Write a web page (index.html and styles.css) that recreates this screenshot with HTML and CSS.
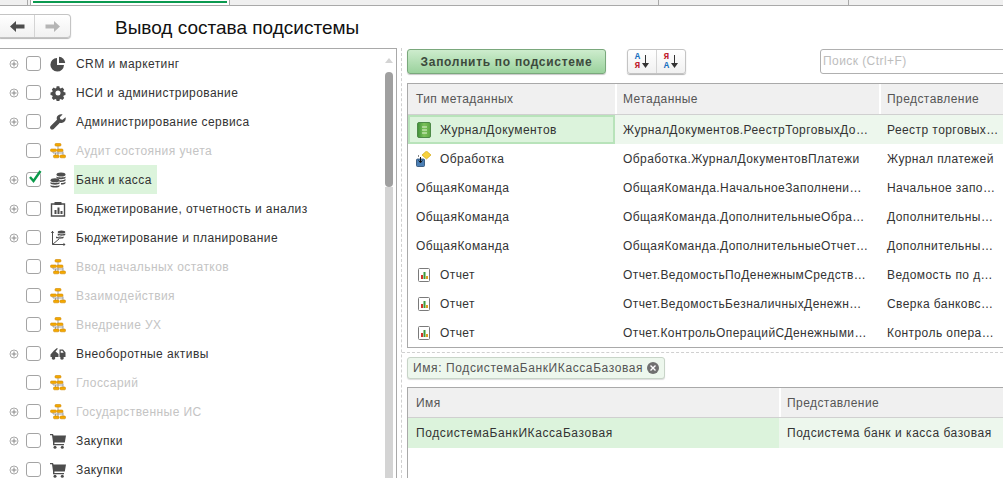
FILE: index.html
```html
<!DOCTYPE html>
<html lang="ru">
<head>
<meta charset="utf-8">
<title>Вывод состава подсистемы</title>
<link rel="stylesheet" href="styles.css">
</head>
<body>
<svg class="defs" width="0" height="0" aria-hidden="true">
  <symbol id="i-plus" viewBox="0 0 10 10"><circle cx="5" cy="5" r="4" fill="#fff" stroke="#a8a8a8"/><path d="M2.500 5h5M5 2.500v5" stroke="#8a8a8a" fill="none"/></symbol>
  <symbol id="i-pie" viewBox="0 0 16 16"><path d="M7 2a6.800 6.800 0 1 0 7 7H7z" fill="#4d4d4d"/><path d="M9 .8a6.600 6.600 0 0 1 6.200 6.200H9z" fill="#4d4d4d"/></symbol>
  <symbol id="i-gear" viewBox="0 0 16 16"><path fill-rule="evenodd" fill="#4d4d4d" d="M6.500 1h3l.4 1.900 1.200.5 1.700-1 2.100 2.100-1 1.700.5 1.200 1.900.4v3l-1.900.4-.5 1.200 1 1.700-2.100 2.100-1.700-1-1.200.5-.4 1.900h-3l-.4-1.900-1.200-.5-1.700 1-2.100-2.100 1-1.700-.5-1.200-1.900-.4v-3l1.900-.4.500-1.200-1-1.700 2.100-2.100 1.700 1 1.200-.5zM8 5.600a2.800 2.800 0 1 0 0 5.600 2.800 2.800 0 0 0 0-5.600z" transform="translate(.8 .4) scale(.9)"/></symbol>
  <symbol id="i-wrench" viewBox="0 0 16 16"><path fill="#4d4d4d" d="M15.500 3.200l-2.900 2.600-2.200-.5-.6-2.100L12.600.5C10.500-.3 8 .6 7.100 2.600c-.5 1.100-.5 2.200-.1 3.200L.7 12c-.9.900-.9 2.200 0 3 .8.800 2.100.8 3 0l6.200-6.300c1 .4 2.200.4 3.300-.1 2-.9 3-3.300 2.300-5.400z"/></symbol>
  <symbol id="i-org" viewBox="0 0 16 16"><path d="M8 3v3M3 8.500V10h10V8.500M8 8.500V12M5.500 10v2M13 10v2" stroke="#8a8a8a" fill="none" stroke-width=".8"/><g fill="#f4a900" stroke="#d08600" stroke-width=".6"><rect x="5" y=".5" width="6" height="2.600" rx="1"/><rect x=".5" y="6" width="6" height="2.600" rx="1"/><rect x="7" y="6" width="6" height="2.600" rx="1"/><rect x="3.500" y="12" width="5.500" height="2.800" rx="1"/><rect x="10" y="12" width="5.500" height="2.800" rx="1"/></g></symbol>
  <symbol id="i-coins" viewBox="0 0 16 16"><g fill="#4d4d4d"><ellipse cx="11" cy="2.500" rx="4.500" ry="2"/><path d="M6.500 4.500c1 1.200 8 1.200 9 0v1.500c-.5 1.500-8.500 1.500-9 0zM8 8.200c2.500.4 6.500.3 7.500-1.100v1.500c-.4 1-3 1.400-5.500 1.300zM11 11c2 0 4-.5 4.500-1.300v1.500c-.4.900-2.500 1.300-4.500 1.300z"/><ellipse cx="5" cy="8.200" rx="4.500" ry="2"/><path d="M.5 10c1 1.200 8 1.200 9 0v1.500c-.5 1.500-8.500 1.500-9 0zM.5 13c1 1.200 8 1.200 9 0v1.300c-.5 1.700-8.500 1.700-9 0z"/></g></symbol>
  <symbol id="i-report" viewBox="0 0 16 16"><path d="M1.500 3h13v12h-13z" fill="#fff" stroke="#4d4d4d" stroke-width="1.400"/><path d="M4.500 1h7v3h-7z" fill="#4d4d4d"/><path d="M4.500 9h2v4h-2zM7.500 6.500h2V13h-2zM10.500 10h2v3h-2z" fill="#4d4d4d"/></symbol>
  <symbol id="i-plan" viewBox="0 0 16 16"><path d="M2.500 1v13.500H15M2.500 14.500L9 9" stroke="#4d4d4d" fill="none"/><path d="M.8 3l1.700-2 1.700 2zM13.500 12.800l2 1.700-2 1.700z" fill="#4d4d4d"/><g fill="#4d4d4d"><ellipse cx="11.500" cy="2" rx="3.800" ry="1.600"/><path d="M7.700 3.500c1 1 6.600 1 7.600 0v1.300c-.5 1.200-7.100 1.200-7.600 0zM6 6.500c1 1 6.600 1 7.600 0v1.300c-.5 1.200-7.100 1.200-7.600 0zM7.700 5.500c1 .6 3 .7 4.500.5-1.500.6-3.500.5-4.500-.1z"/></g></symbol>
  <symbol id="i-truck" viewBox="0 0 16 16"><g fill="#4d4d4d"><path fill-rule="evenodd" d="M9.500 3.500h3.500l2.500 3v4.500H9.500zM10.700 4.700v2.100h3l-1.300-2.100z"/><path d="M.5 11V8.500l3.500-4L7 2l.8.800L5.500 5.500 8.500 8v3z"/><circle cx="3.500" cy="12" r="1.800"/><circle cx="12" cy="12" r="1.800"/></g></symbol>
  <symbol id="i-cart" viewBox="0 0 16 16"><g fill="#4d4d4d"><path d="M0 1h3l.6 1.500H16l-1.200 7H4.500l-.1 1.500H14v1.200H3V9L2 2.200H0z"/><circle cx="5" cy="14.300" r="1.500"/><circle cx="12.300" cy="14.300" r="1.500"/></g></symbol>
  <symbol id="i-journal" viewBox="0 0 14 16"><defs><linearGradient id="jg" x1="0" x2="1" y1="0" y2="0"><stop offset="0" stop-color="#3f8f3a"/><stop offset=".5" stop-color="#7cc25a"/><stop offset="1" stop-color="#5ea645"/></linearGradient></defs><rect x=".5" y=".5" width="13" height="15" rx="1.500" fill="url(#jg)" stroke="#4e8a48"/><path d="M5 5h5M5 8h5M5 11h5" stroke="#e3f5d5"/></symbol>
  <symbol id="i-proc" viewBox="0 0 16 16"><path d="M10.500 0L15 4l-4.500 4L6 4z" fill="#f7d23e" stroke="#c9a000" stroke-width=".6"/><rect x=".5" y="8" width="8" height="7.500" rx="1" fill="#4b7fb5" stroke="#27496e" stroke-width=".8"/><path d="M2.500 4.500v1M4.500 6v5M2.600 9.500l1.900 2.300 1.900-2.300" stroke="#111" fill="none"/></symbol>
  <symbol id="i-rep" viewBox="0 0 14 16"><rect x="1.500" y="1.500" width="11" height="13" rx="1" fill="#fff" stroke="#7a7a7a"/><rect x="4" y="8" width="2" height="4" fill="#d0342c"/><rect x="6.500" y="5" width="2" height="7" fill="#3e9a3e"/><rect x="9" y="9" width="2" height="3" fill="#e0a020"/></symbol>
</svg>

<div class="tabs">
  <div class="tab tab-edge"></div>
  <div class="tab tab-active"><span class="tab-mark"></span></div>
  <div class="tab tab-b"></div>
  <div class="tab tab-c"></div>
  <div class="tab tab-d"></div>
</div>

<header class="head">
  <div class="nav">
    <span class="nav-btn">
      <svg width="15" height="11" viewBox="0 0 15 11"><path d="M0 5.500L6 0v3.500h8.500v4H6V11z" fill="#4d4d4d"/></svg>
    </span>
    <span class="nav-btn">
      <svg width="15" height="11" viewBox="0 0 15 11"><path d="M15 5.500L9 0v3.500H.5v4H9V11z" fill="#b5b5b5"/></svg>
    </span>
  </div>
  <h1 class="title">Вывод состава подсистемы</h1>
</header>

<main class="main">
  <section class="tree-panel">
    <ul class="tree">
      <li class="node"><svg class="exp"><use href="#i-plus"/></svg><span class="check"></span><svg class="ico"><use href="#i-pie"/></svg><span class="label">CRM и маркетинг</span></li>
      <li class="node"><svg class="exp"><use href="#i-plus"/></svg><span class="check"></span><svg class="ico"><use href="#i-gear"/></svg><span class="label">НСИ и администрирование</span></li>
      <li class="node"><svg class="exp"><use href="#i-plus"/></svg><span class="check"></span><svg class="ico"><use href="#i-wrench"/></svg><span class="label">Администрирование сервиса</span></li>
      <li class="node off"><span class="exp"></span><span class="check"></span><svg class="ico"><use href="#i-org"/></svg><span class="label">Аудит состояния учета</span></li>
      <li class="node"><svg class="exp"><use href="#i-plus"/></svg><span class="check"><svg class="tick" width="14" height="14" viewBox="0 0 14 14"><path d="M2 7l3.500 4L12.500 1" fill="none" stroke="#0a9a4a" stroke-width="2.400"/></svg></span><svg class="ico"><use href="#i-coins"/></svg><span class="label current">Банк и касса</span></li>
      <li class="node"><svg class="exp"><use href="#i-plus"/></svg><span class="check"></span><svg class="ico"><use href="#i-report"/></svg><span class="label">Бюджетирование, отчетность и анализ</span></li>
      <li class="node"><svg class="exp"><use href="#i-plus"/></svg><span class="check"></span><svg class="ico"><use href="#i-plan"/></svg><span class="label">Бюджетирование и планирование</span></li>
      <li class="node off"><span class="exp"></span><span class="check"></span><svg class="ico"><use href="#i-org"/></svg><span class="label">Ввод начальных остатков</span></li>
      <li class="node off"><span class="exp"></span><span class="check"></span><svg class="ico"><use href="#i-org"/></svg><span class="label">Взаимодействия</span></li>
      <li class="node off"><span class="exp"></span><span class="check"></span><svg class="ico"><use href="#i-org"/></svg><span class="label">Внедрение УХ</span></li>
      <li class="node"><svg class="exp"><use href="#i-plus"/></svg><span class="check"></span><svg class="ico"><use href="#i-truck"/></svg><span class="label">Внеоборотные активы</span></li>
      <li class="node off"><span class="exp"></span><span class="check"></span><svg class="ico"><use href="#i-org"/></svg><span class="label">Глоссарий</span></li>
      <li class="node off"><svg class="exp"><use href="#i-plus"/></svg><span class="check"></span><svg class="ico"><use href="#i-org"/></svg><span class="label">Государственные ИС</span></li>
      <li class="node"><svg class="exp"><use href="#i-plus"/></svg><span class="check"></span><svg class="ico"><use href="#i-cart"/></svg><span class="label">Закупки</span></li>
      <li class="node"><svg class="exp"><use href="#i-plus"/></svg><span class="check"></span><svg class="ico"><use href="#i-cart"/></svg><span class="label">Закупки</span></li>
    </ul>
    <div class="scrollbar">
      <span class="sb-up"></span>
      <span class="sb-thumb"></span>
      <span class="sb-track"></span>
    </div>
  </section>

  <section class="content">
    <div class="toolbar">
      <button class="fill-btn" type="button">Заполнить по подсистеме</button>
      <div class="sort-group">
        <span class="sort-btn"><span class="az"><b class="blue">А</b><b class="red">Я</b></span><svg width="7" height="14" viewBox="0 0 7 14"><path d="M3.500 0v9" stroke="#333" fill="none"/><path d="M0 8h7l-3.500 5z" fill="#333"/></svg></span>
        <span class="sort-btn"><span class="az"><b class="red">Я</b><b class="blue">А</b></span><svg width="7" height="14" viewBox="0 0 7 14"><path d="M3.500 0v9" stroke="#333" fill="none"/><path d="M0 8h7l-3.500 5z" fill="#333"/></svg></span>
      </div>
      <div class="search">Поиск (Ctrl+F)</div>
    </div>

    <div class="grid grid-a">
      <div class="grow ghead"><span class="c c1">Тип метаданных</span><span class="c c2">Метаданные</span><span class="c c3">Представление</span></div>
      <div class="grow sel"><span class="c c1 focus"><svg class="ci"><use href="#i-journal"/></svg>ЖурналДокументов</span><span class="c c2">ЖурналДокументов.РеестрТорговыхДо…</span><span class="c c3">Реестр торговых…</span></div>
      <div class="grow"><span class="c c1"><svg class="ci"><use href="#i-proc"/></svg>Обработка</span><span class="c c2">Обработка.ЖурналДокументовПлатежи</span><span class="c c3">Журнал платежей</span></div>
      <div class="grow"><span class="c c1">ОбщаяКоманда</span><span class="c c2">ОбщаяКоманда.НачальноеЗаполнени…</span><span class="c c3">Начальное запо…</span></div>
      <div class="grow"><span class="c c1">ОбщаяКоманда</span><span class="c c2">ОбщаяКоманда.ДополнительныеОбра…</span><span class="c c3">Дополнительны…</span></div>
      <div class="grow"><span class="c c1">ОбщаяКоманда</span><span class="c c2">ОбщаяКоманда.ДополнительныеОтчет…</span><span class="c c3">Дополнительны…</span></div>
      <div class="grow"><span class="c c1"><svg class="ci"><use href="#i-rep"/></svg>Отчет</span><span class="c c2">Отчет.ВедомостьПоДенежнымСредств…</span><span class="c c3">Ведомость по д…</span></div>
      <div class="grow"><span class="c c1"><svg class="ci"><use href="#i-rep"/></svg>Отчет</span><span class="c c2">Отчет.ВедомостьБезналичныхДенежн…</span><span class="c c3">Сверка банковс…</span></div>
      <div class="grow"><span class="c c1"><svg class="ci"><use href="#i-rep"/></svg>Отчет</span><span class="c c2">Отчет.КонтрольОперацийСДенежными…</span><span class="c c3">Контроль опера…</span></div>
    </div>

    <div class="split"></div>

    <div class="chip">Имя: ПодсистемаБанкИКассаБазовая<span class="chip-x"><svg width="12" height="12" viewBox="0 0 12 12"><circle cx="6" cy="6" r="6" fill="#707070"/><path d="M3.500 3.500l5 5M8.500 3.500l-5 5" stroke="#fff" stroke-width="1.400"/></svg></span></div>

    <div class="grid grid-b">
      <div class="grow ghead tall"><span class="c d1">Имя</span><span class="c d2">Представление</span></div>
      <div class="grow sel plain"><span class="c d1 strong">ПодсистемаБанкИКассаБазовая</span><span class="c d2 wide">Подсистема банк и касса базовая</span></div>
    </div>
  </section>
</main>
</body>
</html>
```

FILE: styles.css
```css
* { box-sizing: border-box; }
html, body { margin: 0; padding: 0; height: 100%; overflow: hidden; background: #fff; }
body { width: 1003px; height: 478px; display: flex; flex-direction: column; font: 12px/1 "Liberation Sans", Arial, sans-serif; color: #333; letter-spacing: .43px; }
.defs { position: absolute; }

.tabs { display: flex; height: 6px; flex: none; background: #f0f0f0; border-bottom: 1px solid #a9a9a9; }
.tab { height: 5px; border-right: 1px solid #a9a9a9; }
.tab-edge { width: 28px; }
.tab-active { width: 200px; margin-left: 2px; background: #fff; border-left: 1px solid #a9a9a9; padding: 1px 2px 0; }
.tab-mark { display: block; height: 2px; background: #0b9a50; }
.tab-b { width: 429px; }
.tab-c { width: 190px; }
.tab-d { flex: 1; border-right: 0; }

.head { height: 42px; flex: none; display: flex; align-items: flex-start; }
.nav { display: flex; width: 71px; height: 24px; margin-top: 8px; border: 1px solid #c4c4c4; border-left: 0; border-radius: 0 4px 4px 0; background: linear-gradient(#fff, #f1f1f1); box-shadow: 0 1px 1px #b5b5b5; }
.nav-btn { width: 35px; display: flex; align-items: center; justify-content: center; }
.nav-btn:first-child { border-right: 1px solid #d4d4d4; }
.title { margin: 12px 0 0 44px; font-size: 19px; font-weight: 400; line-height: 20px; color: #111; letter-spacing: 0; }

.main { flex: 1; display: flex; min-height: 0; }

.tree-panel { width: 397px; flex: none; display: flex; border-top: 1px solid #a9a9a9; border-right: 1px solid #a9a9a9; overflow: hidden; }
.tree { list-style: none; margin: 0; padding: 0; width: 385px; flex: none; }
.node { height: 29px; display: flex; align-items: center; padding-left: 9px; color: #333; }
.node.off { color: #c4c4c4; }
.exp { width: 10px; height: 10px; flex: none; }
.check { position: relative; width: 15px; height: 15px; margin-left: 7px; flex: none; background: #fff; border: 1px solid #a4a4a4; border-radius: 3px; }
.tick { position: absolute; left: 1px; top: -3px; }
.ico { width: 16px; height: 16px; margin-left: 9px; flex: none; }
.label { display: flex; align-items: center; height: 29px; margin-left: 8px; padding: 0 2px; white-space: nowrap; }
.current { background: #dcf4dc; padding-right: 5px; }

.scrollbar { width: 8px; flex: none; display: flex; flex-direction: column; align-items: stretch; }
.sb-up { height: 23px; flex: none; position: relative; }
.sb-up::before { content: ""; position: absolute; left: 0; top: 9px; border: 4px solid transparent; border-top: 0; border-bottom: 5px solid #d4d4d4; }
.sb-thumb { height: 115px; flex: none; background: #a0a0a0; border-radius: 4px; }
.sb-track { flex: 1; background: #d4d4d4; }

.content { flex: 1; min-width: 0; margin-left: 4px; padding-left: 5px; padding-top: 1px; border-left: 1px dashed #d0d0d0; display: flex; flex-direction: column; overflow: hidden; }

.toolbar { height: 25px; flex: none; display: flex; align-items: stretch; }
.fill-btn { width: 199px; flex: none; padding: 0; font: bold 12px "Liberation Sans", Arial, sans-serif; letter-spacing: .7px; color: #3c4a3c; border: 1px solid #7aa87c; border-radius: 3px; background: linear-gradient(#cdeccd, #9bd29d); box-shadow: 0 1px 1px #c8c8c8; }
.sort-group { display: flex; flex: none; width: 59px; margin-left: 21px; border: 1px solid #c4c4c4; border-radius: 3px; background: linear-gradient(#fff, #f1f1f1); box-shadow: 0 1px 1px #b5b5b5; }
.sort-btn { flex: 1; display: flex; align-items: center; justify-content: center; gap: 2px; }
.sort-btn + .sort-btn { border-left: 1px solid #d4d4d4; }
.az { display: flex; flex-direction: column; font: 9px/9px "Liberation Mono", monospace; letter-spacing: 0; }
.az b { font-weight: 700; }
.blue { color: #1a6fc0; }
.red { color: #c0202c; }
.search { width: 190px; flex: none; margin-left: 134px; padding: 0 2px; border: 1px solid #b0b0b0; border-radius: 3px; line-height: 23px; color: #bdbdbd; white-space: nowrap; }

.grid { flex: none; width: 640px; border: 1px solid #a9a9a9; border-right: 0; }
.grid-a { margin-top: 9px; height: 265px; }
.grid-b { margin-top: 8px; flex: 1; border-bottom: 0; }
.grow { display: flex; height: 29px; }
.ghead { height: 31px; background: #f0f0f0; border-bottom: 1px solid #d0d0d0; color: #555; }
.ghead.tall { height: 30px; }
.c { display: flex; align-items: center; flex: none; padding: 0 8px; height: 100%; white-space: nowrap; }
.c1 { width: 207px; }
.c2 { width: 264px; }
.c3 { width: 128px; }
.d1 { width: 371px; }
.d2 { width: 260px; }
.wide { letter-spacing: .53px; }
.ghead .c + .c { border-left: 2px solid #fff; padding-left: 6px; }
.sel { background: #edf7ed; }
.focus { background: #dcf3dc; border: 2px solid #b8e3ba; padding: 0 6px; }
.strong { background: #dcf3dc; letter-spacing: .59px; }
.plain { height: 30px; }
.ci { width: 16px; height: 16px; margin-right: 8px; flex: none; }

.split { flex: none; height: 1px; margin: 4px 0 4px -5px; border-top: 1px dashed #d0d0d0; }
.chip { flex: none; width: 258px; height: 22px; display: flex; align-items: center; padding-left: 5px; border: 1px solid #c8d4c8; border-radius: 3px; background: #edf7ed; color: #555; white-space: nowrap; box-shadow: 0 1px 1px #ddd; letter-spacing: .6px; }
.chip-x { display: flex; margin-left: 4px; }
```
